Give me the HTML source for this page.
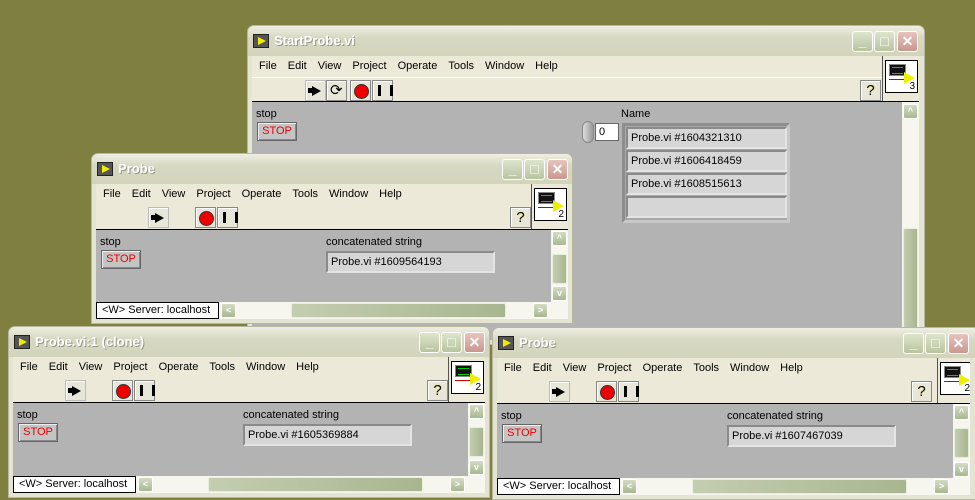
<!DOCTYPE html>
<html><head><meta charset="utf-8"><style>
*{box-sizing:border-box;margin:0;padding:0}
body{width:975px;height:500px;overflow:hidden;background:#7f7f40;font-family:"Liberation Sans",sans-serif;font-size:11px;color:#000;position:relative}
.win{position:absolute;background:#e4e4d2;border:1px solid #b8b8a0;border-radius:7px 7px 0 0;overflow:hidden}
.tb{position:absolute;left:0;right:0;top:0;height:30px;background:linear-gradient(#eeeee2,#d6d8c2 40%,#d2d4bc);}
.tt{position:absolute;left:26px;top:7px;font-weight:bold;font-size:13px;color:#fff;text-shadow:1px 1px 0 #9a9a88}
.ticon{position:absolute;left:5px;top:8px;width:16px;height:14px;background:#555;border:1px solid #222}
.ticon:after{content:"";position:absolute;left:4px;top:2px;border-left:8px solid #ee0;border-top:4px solid transparent;border-bottom:4px solid transparent}
.tbtn{position:absolute;top:5px;width:21px;height:21px;border:1px solid #fff;border-radius:3px;background:linear-gradient(#dde4cc,#b8c4a0);color:#fff;text-align:center;font-weight:bold;font-size:14px;line-height:18px}
.tbtn.x{background:linear-gradient(#e8c4bc,#c89890)}
.in{position:absolute;left:4px;right:4px;top:30px;bottom:4px;background:#ece9d8;overflow:hidden}
.menu{position:absolute;left:0;top:0;height:21px;line-height:21px;white-space:nowrap}
.menu span{margin-left:7px;margin-right:4px}
.menu span:first-letter{text-decoration:underline}
.tool{position:absolute;left:0;top:21px;height:25px;border-top:1px solid #fff}
.sep{position:absolute;left:0;right:0;top:45px;height:1px;background:#000}
.iconarea{position:absolute;right:0;top:0;width:37px;height:45px;border-left:1px solid #555;background:#ece9d8}
.vi{position:absolute;left:2px;top:4px;width:33px;height:33px;background:#fff;border:1px solid #000}
.vi i{position:absolute;left:3px;top:3px;width:17px;height:12px;background:#111;border:1px solid #888}
.vi i:after{content:"";position:absolute;left:2px;top:2px;width:11px;height:5px;border-top:1px solid #0c0;border-bottom:1px solid #0c0}
.vi b{position:absolute;left:18px;top:11px;border-left:11px solid #ee0;border-top:6px solid transparent;border-bottom:6px solid transparent}
.vi em{position:absolute;right:2px;bottom:0;font-style:normal;font-size:10px}
.vi u{position:absolute;left:3px;top:18px;width:18px;height:1px;background:#c00}
.btn{position:absolute;top:3px;width:21px;height:21px;border:1px solid #888;background:#e8e6d8;box-shadow:inset 1px 1px #fff}
.run:after{content:"";position:absolute;left:6px;top:5px;border-left:9px solid #000;border-top:5px solid transparent;border-bottom:5px solid transparent}
.run:before{content:"";position:absolute;left:2px;top:7px;width:5px;height:5px;border-left:1px dotted #000;border-right:2px solid #000;background:#000}
.abort:after{content:"";position:absolute;left:3px;top:3px;width:13px;height:13px;border-radius:50%;background:#e00;border:1px solid #333}
.pause:after{content:"";position:absolute;left:5px;top:4px;width:9px;height:11px;border-left:3px solid #000;border-right:3px solid #000}
.rep:after{content:"⟳";position:absolute;left:3px;top:0;font-size:15px}
.help{font-size:15px;text-align:center;line-height:19px;color:#000;text-shadow:0 0 1px #ee0}
.content{position:absolute;left:0;top:46px;background:#b3b3b3;bottom:0}
.lbl{position:absolute;white-space:nowrap}
.stop{position:absolute;width:40px;height:19px;background:#c4c4c4;border:1px solid #666;box-shadow:inset 1px 1px #eee,inset -1px -1px #888;color:#e00;text-align:center;line-height:17px}
.str{position:absolute;height:22px;background:#d6d6d6;border:2px solid;border-color:#8a8a8a #e4e4e4 #e4e4e4 #8a8a8a;padding-left:3px;line-height:18px;white-space:nowrap}
.vs{position:absolute;right:0;width:17px;top:46px;background:#f6f6ee}
.sb{position:absolute;left:1px;width:15px;height:15px;background:linear-gradient(#d4dcc4,#a8b890);border:1px solid #fff;border-radius:2px;color:#fff;font-size:9px;font-weight:bold;text-align:center;line-height:13px}
.thumb{position:absolute;left:1px;width:15px;background:linear-gradient(90deg,#c4cdb0,#a8b690);border:1px solid #e8eedc;border-radius:2px}
.bot{position:absolute;left:0;right:0;bottom:0;height:17px;background:#f6f6ee}
.status{position:absolute;left:0;top:0;height:17px;width:123px;background:#fff;border:1px solid #000;padding-left:5px;line-height:14px}
</style></head><body>

<div class="win" style="left:247px;top:25px;width:678px;height:320px">
 <div class="tb"><div class="ticon"></div><div class="tt">StartProbe.vi</div>
  <div class="tbtn" style="left:604px">_</div><div class="tbtn" style="left:626px">□</div><div class="tbtn x" style="left:649px">✕</div></div>
 <div class="in" style="right:5px">
  <div class="menu"><span>File</span><span>Edit</span><span>View</span><span>Project</span><span>Operate</span><span>Tools</span><span>Window</span><span>Help</span></div>
  <div class="tool" style="right:37px"></div>
  <div class="btn run" style="left:53px;top:24px;border-color:#bbb"></div>
  <div class="btn rep" style="left:74px;top:24px"></div>
  <div class="btn abort" style="left:98px;top:24px"></div>
  <div class="btn pause" style="left:120px;top:24px"></div>
  <div class="btn help" style="left:608px;top:24px">?</div>
  <div class="iconarea"><div class="vi"><i></i><u></u><b></b><em>3</em></div></div>
  <div class="sep"></div>
  <div class="content" style="right:17px">
   <div class="lbl" style="left:4px;top:6px">stop</div>
   <div class="stop" style="left:5px;top:20px">STOP</div>
   <div style="position:absolute;left:330px;top:19px;width:12px;height:22px;border-radius:6px;background:linear-gradient(90deg,#ddd,#999);border:1px solid #888"></div>
   <div style="position:absolute;left:343px;top:21px;width:24px;height:18px;background:#fff;border:1px solid #666;padding-left:3px;line-height:16px">0</div>
   <div class="lbl" style="left:369px;top:6px">Name</div>
   <div style="position:absolute;left:370px;top:21px;width:168px;height:100px;background:#a8a8a8;border:3px solid;border-color:#8e8e8e #c8c8c8 #c8c8c8 #8e8e8e"></div>
   <div class="str" style="left:374px;top:25px;width:161px">Probe.vi #1604321310</div>
   <div class="str" style="left:374px;top:48px;width:161px">Probe.vi #1606418459</div>
   <div class="str" style="left:374px;top:71px;width:161px">Probe.vi #1608515613</div>
   <div class="str" style="left:374px;top:94px;width:161px"></div>
  </div>
  <div class="vs" style="bottom:0"><div class="sb" style="top:2px">^</div><div class="thumb" style="top:126px;height:140px"></div></div>
 </div>
</div>

<div class="win" style="left:91px;top:153px;width:482px;height:171px">
 <div class="tb"><div class="ticon"></div><div class="tt">Probe</div>
  <div class="tbtn" style="left:410px">_</div><div class="tbtn" style="left:432px">□</div><div class="tbtn x" style="left:455px">✕</div></div>
 <div class="in">
  <div class="menu"><span>File</span><span>Edit</span><span>View</span><span>Project</span><span>Operate</span><span>Tools</span><span>Window</span><span>Help</span></div>
  <div class="btn run" style="left:52px;top:23px;border-color:#bbb"></div>
  <div class="btn abort" style="left:99px;top:23px"></div>
  <div class="btn pause" style="left:121px;top:23px"></div>
  <div class="btn help" style="left:414px;top:23px">?</div>
  <div class="iconarea"><div class="vi"><i></i><u></u><b></b><em>2</em></div></div>
  <div class="sep"></div>
  <div class="content" style="right:17px;bottom:17px">
   <div class="lbl" style="left:4px;top:6px">stop</div>
   <div class="stop" style="left:5px;top:20px">STOP</div>
   <div class="lbl" style="left:230px;top:6px">concatenated string</div>
   <div class="str" style="left:230px;top:21px;width:169px">Probe.vi #1609564193</div>
  </div>
  <div class="vs" style="bottom:17px"><div class="sb" style="top:1px">^</div><div class="thumb" style="top:24px;height:30px"></div><div class="sb" style="bottom:1px">v</div></div>
  <div class="bot"><div class="status">&lt;W&gt; Server: localhost</div>
   <div class="sb" style="left:125px;top:1px">&lt;</div><div class="thumb" style="left:195px;top:1px;width:215px;height:15px"></div><div class="sb" style="left:437px;top:1px">&gt;</div></div>
 </div>
</div>

<div class="win" style="left:8px;top:326px;width:482px;height:172px">
 <div class="tb"><div class="ticon"></div><div class="tt">Probe.vi:1 (clone)</div>
  <div class="tbtn" style="left:410px">_</div><div class="tbtn" style="left:432px">□</div><div class="tbtn x" style="left:455px">✕</div></div>
 <div class="in">
  <div class="menu"><span>File</span><span>Edit</span><span>View</span><span>Project</span><span>Operate</span><span>Tools</span><span>Window</span><span>Help</span></div>
  <div class="btn run" style="left:52px;top:23px;border-color:#bbb"></div>
  <div class="btn abort" style="left:99px;top:23px"></div>
  <div class="btn pause" style="left:121px;top:23px"></div>
  <div class="btn help" style="left:414px;top:23px">?</div>
  <div class="iconarea"><div class="vi"><i></i><u></u><b></b><em>2</em></div></div>
  <div class="sep"></div>
  <div class="content" style="right:17px;bottom:17px">
   <div class="lbl" style="left:4px;top:6px">stop</div>
   <div class="stop" style="left:5px;top:20px">STOP</div>
   <div class="lbl" style="left:230px;top:6px">concatenated string</div>
   <div class="str" style="left:230px;top:21px;width:169px">Probe.vi #1605369884</div>
  </div>
  <div class="vs" style="bottom:17px"><div class="sb" style="top:1px">^</div><div class="thumb" style="top:24px;height:30px"></div><div class="sb" style="bottom:1px">v</div></div>
  <div class="bot"><div class="status">&lt;W&gt; Server: localhost</div>
   <div class="sb" style="left:125px;top:1px">&lt;</div><div class="thumb" style="left:195px;top:1px;width:215px;height:15px"></div><div class="sb" style="left:437px;top:1px">&gt;</div></div>
 </div>
</div>

<div class="win" style="left:492px;top:327px;width:490px;height:173px">
 <div class="tb"><div class="ticon"></div><div class="tt">Probe</div>
  <div class="tbtn" style="left:410px">_</div><div class="tbtn" style="left:432px">□</div><div class="tbtn x" style="left:455px">✕</div></div>
 <div class="in" style="right:11px">
  <div class="menu"><span>File</span><span>Edit</span><span>View</span><span>Project</span><span>Operate</span><span>Tools</span><span>Window</span><span>Help</span></div>
  <div class="btn run" style="left:52px;top:23px;border-color:#bbb"></div>
  <div class="btn abort" style="left:99px;top:23px"></div>
  <div class="btn pause" style="left:121px;top:23px"></div>
  <div class="btn help" style="left:414px;top:23px">?</div>
  <div class="iconarea" style="right:-4px"><div class="vi"><i></i><u></u><b></b><em>2</em></div></div>
  <div class="sep"></div>
  <div class="content" style="right:17px;bottom:17px;left:0">
   <div class="lbl" style="left:4px;top:6px">stop</div>
   <div class="stop" style="left:5px;top:20px">STOP</div>
   <div class="lbl" style="left:230px;top:6px">concatenated string</div>
   <div class="str" style="left:230px;top:21px;width:169px">Probe.vi #1607467039</div>
  </div>
  <div class="vs" style="bottom:17px"><div class="sb" style="top:1px">^</div><div class="thumb" style="top:24px;height:30px"></div><div class="sb" style="bottom:1px">v</div></div>
  <div class="bot"><div class="status">&lt;W&gt; Server: localhost</div>
   <div class="sb" style="left:125px;top:1px">&lt;</div><div class="thumb" style="left:195px;top:1px;width:215px;height:15px"></div><div class="sb" style="left:437px;top:1px">&gt;</div></div>
 </div>
</div>
</body></html>
